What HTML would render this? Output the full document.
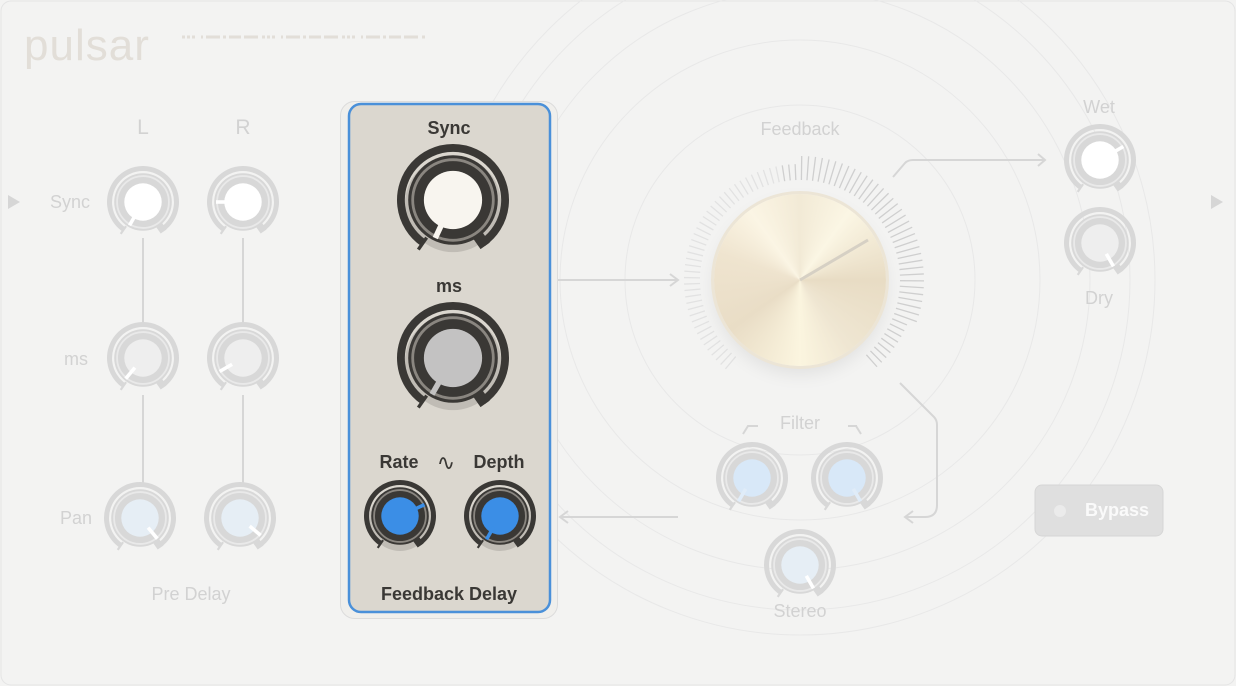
<!DOCTYPE html>
<html><head><meta charset="utf-8"><style>
html,body{margin:0;padding:0;width:1236px;height:686px;overflow:hidden;background:#f2f2f1;font-family:"Liberation Sans",sans-serif}
#wrap{position:relative;width:1236px;height:686px;background:#f3f3f2}
.t{position:absolute;font-size:18px;color:#d2d2d2;text-align:center;transform:translateX(-50%);white-space:nowrap}
.d{color:#3a3835;font-weight:bold;font-size:18px}
#gold{position:absolute;left:714px;top:194px;width:172px;height:172px;border-radius:50%;
background:conic-gradient(from 0deg,#f2ead6,#fbf6e4 10%,#e8dcc4 25%,#efe6d2 40%,#fbf5df 50%,#e9ddc6 65%,#efe4cf 80%,#fbf5e4 90%,#f2ead6);
box-shadow:0 0 0 3px #ece5d6,0 8px 18px rgba(0,0,0,.08)}
</style></head><body><div id="wrap">
<svg id="s" width="1236" height="686" style="position:absolute;left:0;top:0">
<rect x="1" y="1" width="1234" height="684" rx="10" fill="#f3f3f2" stroke="#e4e4e4"/>
<g fill="none" stroke="#e8e8e8" stroke-width="1">
<circle cx="800" cy="280" r="175"/><circle cx="800" cy="280" r="240"/><circle cx="800" cy="280" r="290"/><circle cx="800" cy="280" r="330"/><circle cx="800" cy="280" r="355"/>
</g>
<text x="24" y="60" font-size="44" fill="#e2ded8" font-family="Liberation Sans" letter-spacing="1">pulsar</text>
<line x1="182" y1="37" x2="425" y2="37" stroke="#e2ded8" stroke-width="3" stroke-dasharray="3 2 3 2 3 6 2 3 14 3 3 3 12 3 14 4"/>
<polygon points="8,195 20,202 8,209" fill="#d6d6d6"/>
<polygon points="1211,195 1223,202 1211,209" fill="#d6d6d6"/>
<g stroke="#d6d6d6" stroke-width="2" fill="none">
<line x1="143" y1="238" x2="143" y2="322"/><line x1="143" y1="395" x2="143" y2="485"/>
<line x1="243" y1="238" x2="243" y2="322"/><line x1="243" y1="395" x2="243" y2="485"/>
<path d="M558 280H678M670 274l8 6-8 6"/>
<path d="M678 517H560M568 511l-8 6 8 6"/>
<path d="M893 177l12-14q3-3 8-3H1045M1038 154l7 6-7 6"/>
<path d="M900 383l34 34q3 3 3 8V505q0 12-12 12H905M913 511l-8 6 8 6"/>
<path d="M743 434l5-8h10M857 426h-8M848 426h8l5 8"/>
</g>
<rect x="340.5" y="101.5" width="217" height="517" rx="14" fill="#f0efec" stroke="#dcdcdc"/>
<rect x="349" y="104" width="201" height="508" rx="12" fill="#dbd7cf" stroke="#4a90d9" stroke-width="2.5"/>
<rect x="1035" y="485" width="128" height="51" rx="7" fill="#dfdfdf" stroke="#d6d6d6"/>
<circle cx="1060" cy="511" r="6" fill="#ebebeb"/>
<g id="k"></g>
</svg>
<div id="gold"></div>
<svg width="1236" height="686" style="position:absolute;left:0;top:0"><line x1="800" y1="280" x2="868" y2="240" stroke="#d6d0c4" stroke-width="3"/></svg>
<div class="t" style="left:143px;top:116px;font-size:21px">L</div>
<div class="t" style="left:243px;top:116px;font-size:21px">R</div>
<div class="t" style="left:70px;top:192px">Sync</div>
<div class="t" style="left:76px;top:349px">ms</div>
<div class="t" style="left:76px;top:508px">Pan</div>
<div class="t" style="left:191px;top:584px">Pre Delay</div>
<div class="t d" style="left:449px;top:118px">Sync</div>
<div class="t d" style="left:449px;top:276px">ms</div>
<div class="t d" style="left:399px;top:452px">Rate</div>
<div class="t d" style="left:446px;top:450px;font-weight:normal;font-size:22px">∿</div>
<div class="t d" style="left:499px;top:452px">Depth</div>
<div class="t d" style="left:449px;top:584px">Feedback Delay</div>
<div class="t" style="left:800px;top:119px">Feedback</div>
<div class="t" style="left:800px;top:413px">Filter</div>
<div class="t" style="left:800px;top:601px">Stereo</div>
<div class="t" style="left:1099px;top:97px">Wet</div>
<div class="t" style="left:1099px;top:288px">Dry</div>
<div class="t" style="left:1117px;top:500px;color:#fafafa;font-weight:bold">Bypass</div>
</div>
<script>
var g=document.getElementById('k'),h='';
function P(cx,cy,r,a){a=a*Math.PI/180;return [cx+r*Math.sin(a),cy-r*Math.cos(a)];}
function L(cx,cy,r1,r2,a,c,w){var p=P(cx,cy,r1,a),q=P(cx,cy,r2,a);h+='<line x1="'+p[0]+'" y1="'+p[1]+'" x2="'+q[0]+'" y2="'+q[1]+'" stroke="'+c+'" stroke-width="'+w+'" stroke-linecap="butt"/>';}
function K(cx,cy,R,body,ring,cap,pc,ang,sh){
 var a=P(cx,cy,R*.93,-145),b=P(cx,cy,R*.93,145);
 if(sh)h+='<circle cx="'+cx+'" cy="'+(cy+4)+'" r="'+R*.86+'" fill="rgba(0,0,0,.12)"/>';
 h+='<path d="M'+a[0]+' '+a[1]+'A'+R*.93+' '+R*.93+' 0 1 1 '+b[0]+' '+b[1]+'" fill="none" stroke="'+body+'" stroke-width="'+R*.14+'"/>';
 L(cx,cy,R*.7,R*1.0,145,body,R*.2);
 h+='<circle cx="'+cx+'" cy="'+cy+'" r="'+R*.8+'" fill="'+body+'"/>';
 h+='<circle cx="'+cx+'" cy="'+cy+'" r="'+R*.72+'" fill="none" stroke="'+ring+'" stroke-width="'+R*.05+'"/>';
 h+='<circle cx="'+cx+'" cy="'+cy+'" r="'+R*.52+'" fill="'+cap+'"/>';
 L(cx,cy,R*.35,R*.75,ang,pc,R*.1);
 L(cx,cy,R*.82,R*1.08,-145,body,R*.06);
}
var fb='#d8d8d8',fr='#e9e9e9';
K(143,202,36,fb,fr,'#ffffff','#ffffff',-150);K(243,202,36,fb,fr,'#ffffff','#ffffff',-90);
K(143,358,36,fb,fr,'#eeeeee','#ffffff',-140);K(243,358,36,fb,fr,'#eeeeee','#ffffff',-120);
K(140,518,36,fb,fr,'#e6eef5','#ffffff',140);K(240,518,36,fb,fr,'#e6eef5','#ffffff',130);
K(1100,160,36,fb,fr,'#ffffff','#ffffff',60);K(1100,243,36,fb,fr,'#eeeeee','#ffffff',150);
K(752,478,36,fb,fr,'#d8e8f8','#e0ecf8',-150);K(847,478,36,fb,fr,'#d8e8f8','#e0ecf8',150);
K(800,565,36,fb,fr,'#e6eef5','#ffffff',150);
K(453,200,56,'#3a3835','#8a8680','#f8f5ef','#f8f5ef',-155,1);
K(453,358,56,'#3a3835','#8a8680','#c3c2c2','#c3c2c2',-150,1);
K(400,516,36,'#3a3835','#8a8680','#3b8ee6','#3b8ee6',65,1);
K(500,516,36,'#3a3835','#8a8680','#3b8ee6','#3b8ee6',-150,1);
for(var a=-140;a<=140;a+=3.2){var c=a>-10?'#cfcfcf':'#e2e2e2';L(800,280,100,a>0&&a<110?124:116,a,c,1.3);}
g.innerHTML=h;
</script>
</body></html>
